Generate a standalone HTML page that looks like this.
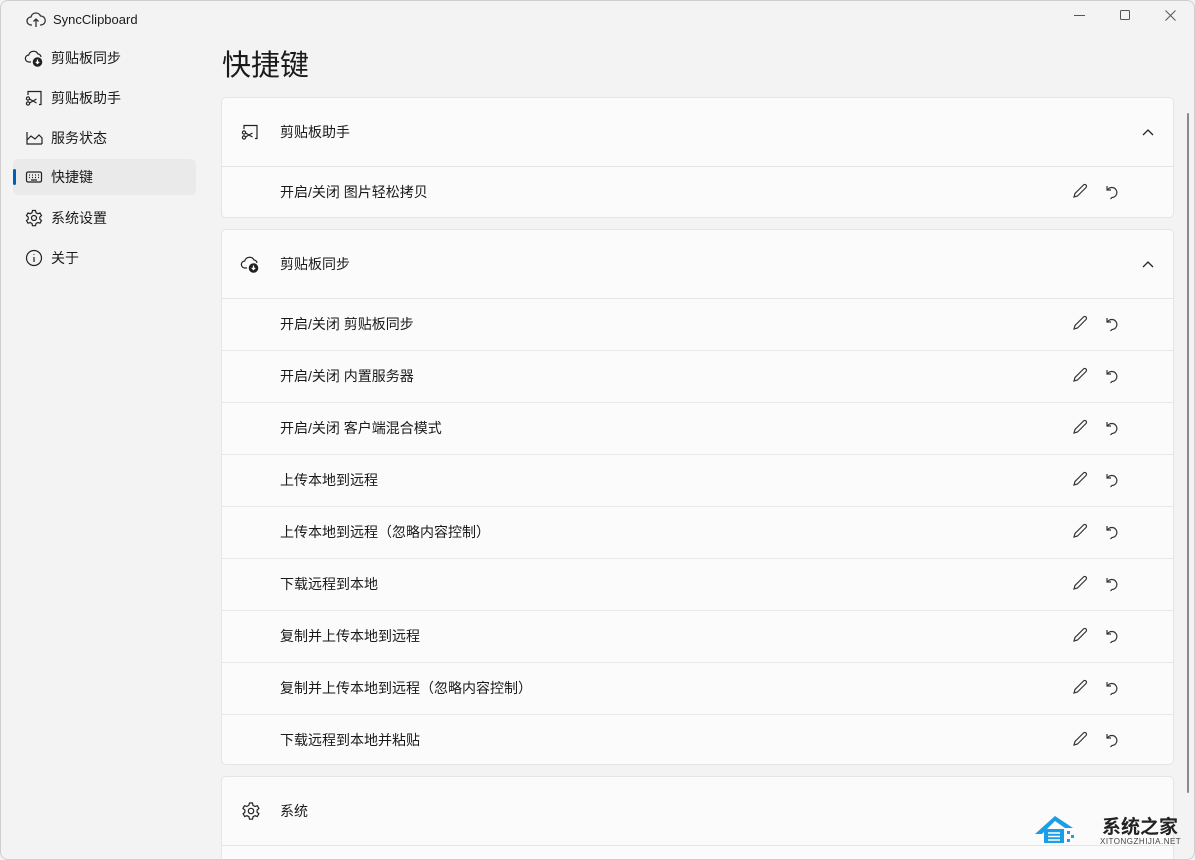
<!DOCTYPE html><html><head><meta charset="utf-8"><style>
*{box-sizing:border-box;margin:0;padding:0}
html{width:1195px;height:860px;overflow:hidden}
body{width:1195px;height:860px;overflow:hidden;background:#f3f3f3;font-family:"Liberation Sans","Noto Sans CJK SC",sans-serif;color:#1a1a1a;position:relative;font-size:14px}
.win{position:absolute;left:0;top:0;width:1195px;height:860px;border:1px solid #cfcfcf;border-radius:8px;z-index:5;pointer-events:none}
.title{position:absolute;left:53px;top:12px;font-size:13px}
.nav{position:absolute;left:13px;width:183px;height:36px;display:flex;align-items:center;font-size:14px}
.nav svg{position:absolute;left:11px}
.nav span{position:absolute;left:38px}
.sel{background:#eaeaea;border-radius:5px}
.sel:before{content:"";position:absolute;left:0;top:10px;width:3px;height:16px;background:#005fb8;border-radius:2px}
h1{position:absolute;left:222px;top:42px;font-size:29px;font-weight:normal}
.card{position:absolute;left:221px;width:953px;background:#fbfbfb;border:1px solid #e5e5e5;border-radius:5px}
.hd{position:relative;height:69px;border-bottom:1px solid #e5e5e5;display:flex;align-items:center}
.hd svg.i{position:absolute;left:18px}
.hd span{position:absolute;left:58px}
.chev{position:absolute;right:18px}
.row{position:relative;height:52px;border-bottom:1px solid #e8e8e8;display:flex;align-items:center}
.row:last-child{border-bottom:none}
.row span{position:absolute;left:58px;top:15px}
.acts{position:absolute;left:849px;top:15px}
</style></head><body><div class="win"></div>
<svg style="position:absolute;left:26px;top:11px" width="20" height="18" viewBox="0 0 20 18" fill="none" stroke="#333" stroke-width="1.3"><path d="M6 14H5a4 4 0 0 1 0-8 5 5 0 0 1 9.5-1A4 4 0 0 1 15 14h-1"/><path d="M10 8v8M7.5 10.5 10 8l2.5 2.5"/></svg>
<div class="title">SyncClipboard</div>
<svg width="0" height="0" style="position:absolute"><defs>
<g id="cloud" fill="none" stroke="#222" stroke-width="1.2"><path d="M7 14H5a3.5 3.5 0 0 1-.3-7A5 5 0 0 1 14 6a3.5 3.5 0 0 1 3 3"/><circle cx="13.5" cy="14" r="4.2" fill="#222"/><path d="M13.5 11.5v4M11.8 13.8l1.7 1.7 1.7-1.7" stroke="#fff"/></g>
<g id="sc" fill="none" stroke="#222" stroke-width="1.2"><path d="M4 7V3.5h13v13h-2M4 16.5"/><circle cx="4" cy="15.5" r="1.6"/><circle cx="4" cy="10.5" r="1.6"/><path d="M5.5 11l7 4M5.5 15l7-4"/></g>
<g id="pen" fill="none" stroke="#333" stroke-width="1.2"><path d="M3 15l1-3.5L12.5 3a1.6 1.6 0 0 1 2.5 2.5L6.5 14z"/></g>
<g id="undo" fill="none" stroke="#333" stroke-width="1.2"><path d="M4 4v4h4"/><path d="M4.5 8A5 5 0 1 1 9 15.5L7.5 17"/></g>
</defs></svg>
<div class="nav" style="top:40px"><svg width="20" height="20"><use href="#cloud"/></svg><span>剪贴板同步</span></div>
<div class="nav" style="top:80px"><svg width="20" height="20"><use href="#sc"/></svg><span>剪贴板助手</span></div>
<div class="nav" style="top:120px"><svg width="20" height="20" fill="none" stroke="#222" stroke-width="1.2"><path d="M3 4v12h15M3 12l4-4 4 3 4-4 3 3v6"/></svg><span>服务状态</span></div>
<div class="nav sel" style="top:159px"><svg width="20" height="20" fill="none" stroke="#222" stroke-width="1.2"><rect x="2.5" y="5" width="15" height="10" rx="1.5"/><path d="M5 8h1M8 8h1M11 8h1M14 8h1M5 10.5h1M8 10.5h1M11 10.5h1M14 10.5h1M7 13h6"/></svg><span>快捷键</span></div>
<div class="nav" style="top:200px"><svg width="20" height="20" fill="none" stroke="#222" stroke-width="1.2"><circle cx="10" cy="10" r="2.5"/><path d="M8.5 2.5h3l.5 2.2 1.8 1 2.2-.7 1.5 2.6-1.7 1.5v2l1.7 1.5-1.5 2.6-2.2-.7-1.8 1-.5 2.2h-3l-.5-2.2-1.8-1-2.2.7-1.5-2.6 1.7-1.5v-2L2.5 7.6 4 5l2.2.7 1.8-1z"/></svg><span>系统设置</span></div>
<div class="nav" style="top:240px"><svg width="20" height="20" fill="none" stroke="#222" stroke-width="1.2"><circle cx="10" cy="10" r="7.5"/><path d="M10 9v5M10 6.2v.8"/></svg><span>关于</span></div>
<svg style="position:absolute;left:1074px;top:15px" width="12" height="2"><path d="M0 .5h11" stroke="#555"/></svg>
<svg style="position:absolute;left:1120px;top:10px" width="11" height="11"><rect x=".5" y=".5" width="9" height="9" rx="1" fill="none" stroke="#555"/></svg>
<svg style="position:absolute;left:1165px;top:10px" width="11" height="11"><path d="M.5.5l10 10M10.5.5l-10 10" stroke="#555"/></svg>
<div style="position:absolute;left:1187px;top:113px;width:2px;height:680px;background:#8a8a8a;border-radius:1px"></div>
<h1>快捷键</h1>
<div class="card" style="top:97px;height:121px">
<div class="hd"><svg class="i" width="22" height="20"><use href="#sc"/></svg><span>剪贴板助手</span><svg class="chev" width="14" height="10"><path d="M2 8l5-5 5 5" fill="none" stroke="#222" stroke-width="1.3"/></svg></div>
<div class="row"><span>开启/关闭 图片轻松拷贝</span><svg class="acts" width="70" height="20"><use href="#pen"/><use href="#undo" x="32"/></svg></div>
</div>
<div class="card" style="top:229px;height:536px">
<div class="hd"><svg class="i" width="22" height="20"><use href="#cloud"/></svg><span>剪贴板同步</span><svg class="chev" width="14" height="10"><path d="M2 8l5-5 5 5" fill="none" stroke="#222" stroke-width="1.3"/></svg></div>
<div class="row"><span>开启/关闭 剪贴板同步</span><svg class="acts" width="70" height="20"><use href="#pen"/><use href="#undo" x="32"/></svg></div>
<div class="row"><span>开启/关闭 内置服务器</span><svg class="acts" width="70" height="20"><use href="#pen"/><use href="#undo" x="32"/></svg></div>
<div class="row"><span>开启/关闭 客户端混合模式</span><svg class="acts" width="70" height="20"><use href="#pen"/><use href="#undo" x="32"/></svg></div>
<div class="row"><span>上传本地到远程</span><svg class="acts" width="70" height="20"><use href="#pen"/><use href="#undo" x="32"/></svg></div>
<div class="row"><span>上传本地到远程（忽略内容控制）</span><svg class="acts" width="70" height="20"><use href="#pen"/><use href="#undo" x="32"/></svg></div>
<div class="row"><span>下载远程到本地</span><svg class="acts" width="70" height="20"><use href="#pen"/><use href="#undo" x="32"/></svg></div>
<div class="row"><span>复制并上传本地到远程</span><svg class="acts" width="70" height="20"><use href="#pen"/><use href="#undo" x="32"/></svg></div>
<div class="row"><span>复制并上传本地到远程（忽略内容控制）</span><svg class="acts" width="70" height="20"><use href="#pen"/><use href="#undo" x="32"/></svg></div>
<div class="row"><span>下载远程到本地并粘贴</span><svg class="acts" width="70" height="20"><use href="#pen"/><use href="#undo" x="32"/></svg></div>
</div>
<div class="card" style="top:776px;height:90px">
<div class="hd"><svg class="i" width="22" height="22" fill="none" stroke="#222" stroke-width="1.2"><circle cx="11" cy="11" r="2.7"/><path d="M9.5 3h3l.5 2.4 2 1.1 2.3-.8 1.6 2.7-1.8 1.6v2.2l1.8 1.6-1.6 2.7-2.3-.8-2 1.1-.5 2.4h-3l-.5-2.4-2-1.1-2.3.8-1.6-2.7 1.8-1.6V10L2.9 8.4 4.5 5.7l2.3.8 2-1.1z"/></svg><span>系统</span></div>
</div>
<svg style="position:absolute;left:1033px;top:812px;z-index:6" width="46" height="34"><path d="M2 22L22 4l18 12H32L22 9 9 22z" fill="#1a9ee6"/><rect x="11" y="17" width="20" height="14" fill="#1a9ee6"/><path d="M15 21h12M15 24.5h12M15 28h12" stroke="#fff" stroke-width="1.5"/><rect x="34" y="19" width="3" height="3" fill="#1a9ee6"/><rect x="38" y="23" width="3" height="3" fill="#1a9ee6"/><rect x="34" y="27" width="3" height="3" fill="#1a9ee6"/></svg>
<div style="position:absolute;left:1102px;top:812px;font-size:19px;font-weight:bold;color:#222;z-index:6">系统之家</div>
<div style="position:absolute;left:1100px;top:837px;font-size:8px;color:#444;letter-spacing:.5px;z-index:6">XITONGZHIJIA.NET</div>
</body></html>
